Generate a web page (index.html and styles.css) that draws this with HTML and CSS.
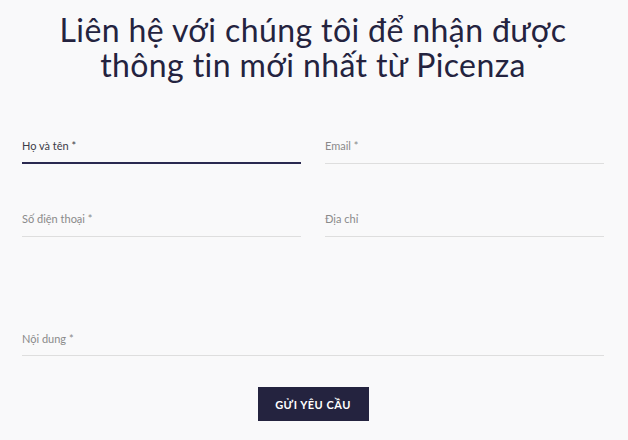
FILE: index.html
```html
<!DOCTYPE html>
<html lang="vi">
<head>
    <meta charset="UTF-8">
    <meta name="viewport" content="width=device-width, initial-scale=1.0">
    <title>Liên hệ - Picenza</title>
    <link rel="stylesheet" href="styles.css">
</head>
<body>
    <div class="contact">
        <h1 class="contact-title">Liên hệ với chúng tôi để nhận được thông tin mới nhất từ Picenza</h1>
        <form class="contact-form">
            <div class="form-grid">
                <label class="field field-active">
                    <span class="field-label">Họ và tên *</span>
                </label>
                <label class="field">
                    <span class="field-label">Email *</span>
                </label>
                <label class="field">
                    <span class="field-label">Số điện thoại *</span>
                </label>
                <label class="field">
                    <span class="field-label">Địa chỉ</span>
                </label>
            </div>
            <label class="field field-message">
                <span class="field-label">Nội dung *</span>
            </label>
            <div class="form-actions">
                <button type="submit">GỬI YÊU CẦU</button>
            </div>
        </form>
    </div>
</body>
</html>
```

FILE: styles.css
```css
body {
    margin: 0;
    padding: 0;
    background-color: #f9f9fa;
    font-family: Lato, "Noto Sans", sans-serif;
    color: #25244a;
}
.contact {
    padding: 12px 24px 0 22px;
}
.contact-title {
    margin: 0 auto;
    max-width: 560px;
    font-size: 32px;
    font-weight: 400;
    letter-spacing: 0.4px;
    line-height: 35px;
    text-align: center;
    color: #24233f;
}
.contact-form {
    margin-top: 57px;
}
.form-grid {
    display: grid;
    grid-template-columns: 1fr 1fr;
    column-gap: 24px;
    row-gap: 48px;
}
.field {
    display: block;
    height: 25px;
    border-bottom: 1px solid #dedede;
    box-sizing: border-box;
}
.field-label {
    display: block;
    font-size: 11px;
    line-height: 14px;
    color: #8a8a8a;
}
.field-active {
    border-bottom: 2px solid #2a2950;
}
.field-active .field-label {
    color: #3c3c48;
}
.field-message {
    margin-top: 95px;
    height: 24px;
}
.form-actions {
    display: flex;
    justify-content: center;
    margin-top: 31px;
}
button {
    width: 111px;
    height: 34px;
    border: none;
    background-color: #24233f;
    color: #fff;
    font-family: Lato, "Noto Sans", sans-serif;
    font-size: 11px;
    font-weight: 700;
    letter-spacing: 0.5px;
    cursor: pointer;
}
```
